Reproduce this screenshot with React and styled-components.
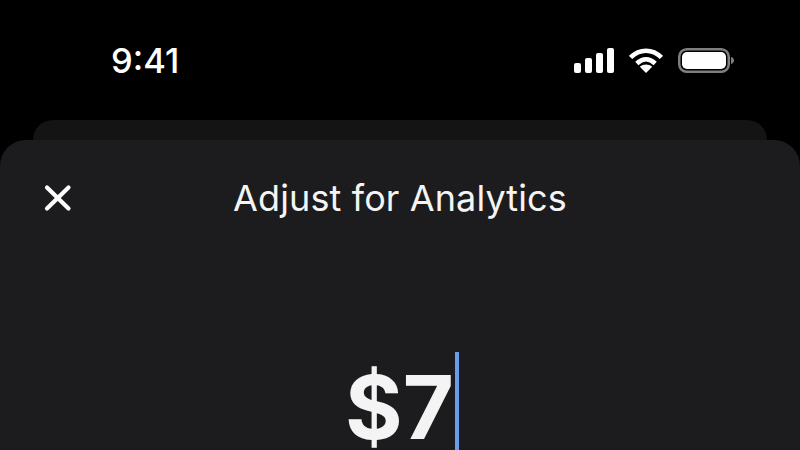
import styled, { createGlobalStyle } from "styled-components";

const Global = createGlobalStyle`
  html, body {
    margin: 0;
    height: 100%;
    background: #000;
    overflow: hidden;
  }
`;

export default function App() {
  return (
    <Screen>
      <Global />
      <StatusBar>
        <Time>9:41</Time>
        <StatusIcons>
          <svg width="40" height="25" viewBox="0 0 40 25" fill="#fff">
            <rect x="0" y="15" width="7" height="10" rx="2" />
            <rect x="11" y="10" width="7" height="15" rx="2" />
            <rect x="22" y="5" width="7" height="20" rx="2" />
            <rect x="33" y="0" width="7" height="25" rx="2" />
          </svg>
          <svg width="34" height="25" viewBox="0 0 34 25" fill="none" stroke="#fff" strokeWidth="4.600">
            <path d="M1.600 9.500C10.500 0.500 23.500 0.500 32.400 9.500" />
            <path d="M7.800 15.500C13.500 10 20.500 10 26.200 15.500" />
            <path d="M17 25L10.800 18.800C14.500 15.800 19.500 15.800 23.200 18.800Z" fill="#fff" stroke="none" />
          </svg>
          <svg width="56" height="25" viewBox="0 0 56 25" fill="none">
            <rect x="1.250" y="1.250" width="49.500" height="22.500" rx="7.500" stroke="#7f7f7f" strokeWidth="2.500" />
            <rect x="4" y="4" width="44" height="17" rx="5" fill="#fff" />
            <path d="M53 9C55 9.700 56 10.800 56 12.500C56 14.200 55 15.300 53 16Z" fill="#7d7d7d" />
          </svg>
        </StatusIcons>
      </StatusBar>
      <BackSheet />
      <Sheet>
        <Header>
          <CloseButton aria-label="Close">
            <svg width="30" height="30" viewBox="0 0 30 30" fill="none" stroke="#fff" strokeWidth="4.200" strokeLinecap="round">
              <path d="M4 4.500L25.500 25.500" />
              <path d="M25.500 4.500L4 25.500" />
            </svg>
          </CloseButton>
          <Title>Adjust for Analytics</Title>
        </Header>
        <AmountRow>
          <Amount>$7</Amount>
          <Caret />
        </AmountRow>
      </Sheet>
    </Screen>
  );
}

const Screen = styled.div`
  display: flex;
  flex-direction: column;
  height: 450px;
  overflow: hidden;
  background: #000;
  font-family: Inter, "Liberation Sans", sans-serif;
  color: #fff;
`;

const StatusBar = styled.div`
  display: flex;
  align-items: center;
  justify-content: space-between;
  height: 120px;
  padding: 0 66px 0 111px;
  flex-shrink: 0;
`;

const Time = styled.span`
  font-size: 34.500px;
  font-weight: 500;
`;

const StatusIcons = styled.div`
  display: flex;
  align-items: center;
  gap: 15px;
`;

const BackSheet = styled.div`
  height: 20px;
  margin: 0 33px;
  flex-shrink: 0;
  background: #141415;
  border-radius: 20px 20px 0 0;
`;

const Sheet = styled.div`
  flex: 1;
  display: flex;
  flex-direction: column;
  background: #1c1c1e;
  border-radius: 26px 26px 0 0;
`;

const Header = styled.div`
  display: grid;
  grid-template-columns: 1fr auto 1fr;
  align-items: center;
  padding: 38px 43px 0;
`;

const CloseButton = styled.button`
  justify-self: start;
  display: flex;
  width: 30px;
  height: 40px;
  padding: 0;
  align-items: center;
  background: none;
  border: none;
`;

const Title = styled.h1`
  margin: 0;
  font-size: 36px;
  font-weight: 400;
  letter-spacing: 0.12px;
  line-height: 40px;
  color: #f4f4f4;
`;

const AmountRow = styled.div`
  display: flex;
  justify-content: center;
  align-items: flex-start;
  padding: 134px 0 0 4px;
`;

const Amount = styled.span`
  margin-top: 13px;
  font-size: 88px;
  font-weight: 700;
  line-height: 84px;
  color: #f4f4f4;
`;

const Caret = styled.div`
  width: 4px;
  height: 98px;
  margin-left: 1px;
  background: #6a9cec;
`;
